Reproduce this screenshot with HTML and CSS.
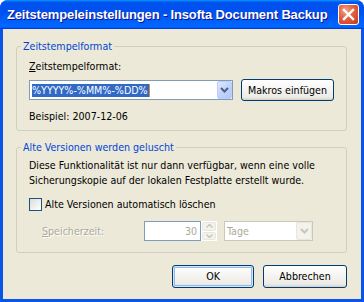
FILE: index.html
```html
<!DOCTYPE html>
<html lang="de">
<head>
  <meta charset="utf-8">
  <link rel="stylesheet" href="styles.css">
  <title>Zeitstempeleinstellungen</title>
</head>
<body>

<div class="window">
  <!-- Title bar -->
  <div class="titlebar">
    <span class="title">Zeitstempeleinstellungen - Insofta Document Backup</span>
    <span class="close">
      <svg width="13" height="13" viewBox="0 0 13 13">
        <path d="M2 2 L11 11 M11 2 L2 11" stroke="#fff" stroke-width="2.4" stroke-linecap="square"/>
      </svg>
    </span>
  </div>

  <div class="content">
    <!-- Timestamp format -->
    <div class="group">
      <div class="group-title">Zeitstempelformat</div>
      <div class="field-label"><u>Z</u>eitstempelformat:</div>
      <div class="format-row">
        <div class="combo">
          <span class="selected">%YYYY%-%MM%-%DD%</span>
          <span class="drop-btn">
            <svg width="9" height="6" viewBox="0 0 9 6"><path d="M1 1 L4.5 4.5 L8 1" fill="none" stroke="#4d6185" stroke-width="2"/></svg>
          </span>
        </div>
        <button class="btn btn-macros">Makros einfügen</button>
      </div>
      <div class="example">Beispiel: 2007-12-06</div>
    </div>

    <!-- Old versions -->
    <div class="group group-old">
      <div class="group-title">Alte Versionen werden geluscht</div>
      <p class="note">Diese Funktionalität ist nur dann verfügbar, wenn eine volle<br>Sicherungskopie auf der lokalen Festplatte erstellt wurde.</p>
      <div class="check-row">
        <span class="checkbox"></span>
        <span>Alte Versionen automatisch löschen</span>
      </div>
      <div class="keep-row">
        <span class="disabled-label"><u>S</u>peicherzeit:</span>
        <div class="spin">30</div>
        <div class="spin-buttons">
          <span class="spin-btn">
            <svg width="7" height="4" viewBox="0 0 7 4"><path d="M0.5 3.5 L3.5 0.5 L6.5 3.5" fill="none" stroke="#c9c7ba" stroke-width="1.5"/></svg>
          </span>
          <span class="spin-btn">
            <svg width="7" height="4" viewBox="0 0 7 4"><path d="M0.5 0.5 L3.5 3.5 L6.5 0.5" fill="none" stroke="#c9c7ba" stroke-width="1.5"/></svg>
          </span>
        </div>
        <div class="combo combo-disabled">
          <span class="combo-text">Tage</span>
          <span class="drop-btn">
            <svg width="9" height="6" viewBox="0 0 9 6"><path d="M1 1 L4.5 4.5 L8 1" fill="none" stroke="#c9c7ba" stroke-width="2"/></svg>
          </span>
        </div>
      </div>
    </div>

    <!-- Dialog buttons -->
    <div class="actions">
      <button class="btn btn-ok">OK</button>
      <button class="btn btn-cancel">Abbrechen</button>
    </div>
  </div>
</div>

</body>
</html>
```

FILE: styles.css
```css
* {
  box-sizing: border-box;
}
body {
  margin: 0;
  background: #fff;
  font-family: "DejaVu Sans Condensed", "DejaVu Sans", sans-serif;
  font-size: 10.6px;
  line-height: 13px;
  color: #000;
}
.window {
  width: 364px;
  height: 302px;
  display: flex;
  flex-direction: column;
  background: #0a55e8;
  border-radius: 8px 8px 0 0;
  overflow: hidden;
}
.titlebar {
  height: 29px;
  flex: none;
  display: flex;
  align-items: center;
  justify-content: space-between;
  padding: 0 5px 0 7px;
  background: linear-gradient(180deg, #0997ff, #0053ee 8%, #0050ee 40%, #06f 88%, #06f 93%, #005bff 95%, #003dd7 96%, #003dd7);
}
.title {
  color: #fff;
  font-family: "Liberation Sans", Arial, sans-serif;
  font-weight: bold;
  font-size: 13px;
  letter-spacing: -0.15px;
  white-space: nowrap;
  text-shadow: 1px 1px #0f1089;
}
.close {
  flex: none;
  width: 21px;
  height: 21px;
  display: flex;
  align-items: center;
  justify-content: center;
  border: 1px solid #fff;
  border-radius: 3px;
  background: radial-gradient(circle at 35% 30%, #f3a78d 0, #e46443 40%, #d4492a 75%, #c0391b 100%);
}
.content {
  flex: 1;
  margin: 0 3px 3px;
  background: #ece9d8;
  padding: 17px 14px 0 13px;
}
.group {
  width: 331px;
  border: 1px solid #d0d0bf;
  border-radius: 3px;
  padding: 0 12px 7px 12px;
}
/* caption sits on the top border line */
.group-title {
  width: fit-content;
  margin: -7px 0 0 -8px;
  padding: 0 2px;
  background: #ece9d8;
  color: #0046d5;
}
.group-old {
  margin-top: 16px;
  padding-bottom: 11px;
}
.field-label {
  margin-top: 7px;
}
.format-row {
  display: flex;
  align-items: center;
  height: 22px;
  margin-top: 6px;
}
.combo {
  width: 204px;
  height: 20px;
  display: flex;
  align-items: center;
  border: 1px solid #7f9db9;
  background: #fff;
  padding-left: 2px;
}
.combo .selected {
  background: #316ac5;
  color: #fff;
  padding: 0 1px 0 0;
  border-right: 1px solid #d98c3c;
}
.drop-btn {
  margin-left: auto;
  width: 15px;
  height: 18px;
  display: flex;
  align-items: center;
  justify-content: center;
  border: 1px solid #bad0fa;
  border-radius: 2px;
  background: linear-gradient(135deg, #e0e9fd, #c1d3fb 50%, #b3c9f7);
}
.btn {
  font: inherit;
  color: #000;
  padding: 0;
  border: 1px solid #003c74;
  border-radius: 3px;
  background: linear-gradient(180deg, #fff, #ecebe6 86%, #d6d0c5);
}
.btn-macros {
  margin-left: 8px;
  width: 93px;
  height: 22px;
}
.example {
  margin-top: 9px;
}
.note {
  margin: 4px 0 0;
  line-height: 15px;
}
.check-row {
  display: flex;
  align-items: center;
  gap: 3px;
  height: 13px;
  margin-top: 10px;
}
.checkbox {
  width: 13px;
  height: 13px;
  border: 1px solid #1c5180;
  background: linear-gradient(135deg, #dcdcd7, #fff);
}
.keep-row {
  display: flex;
  align-items: center;
  height: 20px;
  margin-top: 10px;
}
.disabled-label {
  width: 102px;
  margin-left: 13px;
  color: #aca899;
  text-shadow: 1px 1px #fff;
}
.spin {
  width: 57px;
  height: 20px;
  border: 1px solid #7f9db9;
  background: #fff;
  color: #aca899;
  text-align: right;
  line-height: 18px;
  padding-right: 3px;
}
.spin-buttons {
  width: 16px;
  height: 20px;
  display: flex;
  flex-direction: column;
  gap: 1px;
  padding: 1px;
  background: #fff;
}
.spin-btn {
  flex: 1;
  display: flex;
  align-items: center;
  justify-content: center;
  border: 1px solid #e8e6dd;
  border-radius: 2px;
  background: #f3f2ec;
}
.combo-disabled {
  width: 89px;
  margin-left: 7px;
  border-color: #c9c7ba;
}
.combo-text {
  color: #aca899;
}
.combo-disabled .drop-btn {
  width: 16px;
  border-color: #e8e6dd;
  background: #f3f2ec;
}
.actions {
  display: flex;
  justify-content: flex-end;
  gap: 9px;
  margin-top: 12px;
}
.btn-ok {
  width: 82px;
  height: 23px;
  box-shadow: inset 0 0 0 1px #cee7ff, inset 0 0 0 2px #98b8ea;
}
.btn-cancel {
  width: 84px;
  height: 23px;
}
```
